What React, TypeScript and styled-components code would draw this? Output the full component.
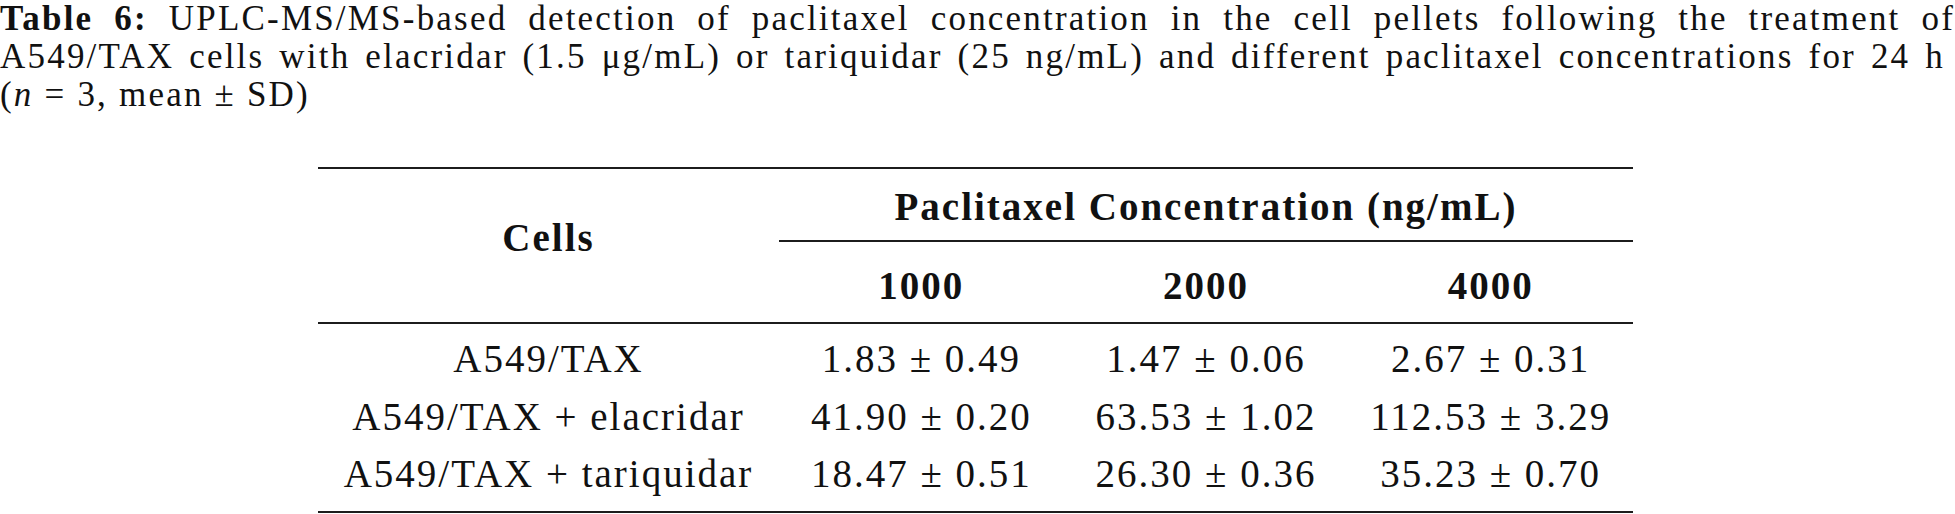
import React from "react";
import styled, { createGlobalStyle } from "styled-components";

const GlobalStyle = createGlobalStyle`
  html, body {
    margin: 0;
    padding: 0;
    background: #ffffff;
  }
  body {
    font-family: "Liberation Serif", "Times New Roman", serif;
    color: #111111;
    overflow: hidden;
  }
`;

const Page = styled.div`
  width: 1955px;
  height: 514px;
  padding-top: 1px;
  box-sizing: border-box;
`;

const Caption = styled.p`
  margin: -1px 0 0 0;
  font-size: 35px;
  line-height: 38px;
  letter-spacing: 2.2px;
`;

const CaptionLine = styled.span<{ $justify?: boolean; $inset?: number }>`
  display: block;
  white-space: nowrap;
  text-align: justify;
  text-align-last: ${(p) => (p.$justify ? "justify" : "left")};
  padding-right: ${(p) => p.$inset ?? 0}px;
`;

const Label = styled.strong`
  font-weight: 700;
`;

const Em = styled.em`
  font-style: italic;
`;

const Table = styled.table`
  margin: 53px 0 0 318px;
  width: 1315px;
  border-collapse: separate;
  border-spacing: 0;
  table-layout: fixed;
  font-size: 39px;
  letter-spacing: 2px;
  color: #111111;
`;

const rule = "2px solid #1c1c1c";

const CellsHead = styled.th`
  width: 461px;
  font-weight: 700;
  text-align: center;
  vertical-align: top;
  line-height: 43px;
  padding: 47px 0 0 0;
  border-top: ${rule};
  border-bottom: ${rule};
`;

const GroupHead = styled.th`
  font-weight: 700;
  text-align: center;
  line-height: 43px;
  padding: 16px 0 12px 0;
  border-top: ${rule};
  border-bottom: ${rule};
`;

const ConcHead = styled.th`
  font-weight: 700;
  text-align: center;
  line-height: 43px;
  padding: 22px 0 15px 0;
  border-bottom: ${rule};
`;

const Row = styled.tr`
  &:first-child td {
    padding-top: 6px;
  }
  &:last-child td {
    padding-bottom: 8px;
    border-bottom: ${rule};
  }
`;

const Cell = styled.td`
  text-align: center;
  line-height: 57.5px;
  padding: 0;
  white-space: nowrap;
`;

const rows: { cells: string; values: string[] }[] = [
  { cells: "A549/TAX", values: ["1.83 ± 0.49", "1.47 ± 0.06", "2.67 ± 0.31"] },
  { cells: "A549/TAX + elacridar", values: ["41.90 ± 0.20", "63.53 ± 1.02", "112.53 ± 3.29"] },
  { cells: "A549/TAX + tariquidar", values: ["18.47 ± 0.51", "26.30 ± 0.36", "35.23 ± 0.70"] },
];

const concentrations = ["1000", "2000", "4000"];

export default function App() {
  return (
    <>
      <GlobalStyle />
      <Page>
        <Caption>
          <CaptionLine $justify>
            <Label>Table 6:</Label> UPLC-MS/MS-based detection of paclitaxel concentration in the cell pellets following the treatment of
          </CaptionLine>
          <CaptionLine $justify $inset={10}>
            A549/TAX cells with elacridar (1.5 μg/mL) or tariquidar (25 ng/mL) and different paclitaxel concentrations for 24 h
          </CaptionLine>
          <CaptionLine>
            (<Em>n</Em> = 3, mean ± SD)
          </CaptionLine>
        </Caption>
        <Table>
          <thead>
            <tr>
              <CellsHead rowSpan={2}>Cells</CellsHead>
              <GroupHead colSpan={3}>Paclitaxel Concentration (ng/mL)</GroupHead>
            </tr>
            <tr>
              {concentrations.map((c) => (
                <ConcHead key={c}>{c}</ConcHead>
              ))}
            </tr>
          </thead>
          <tbody>
            {rows.map((r) => (
              <Row key={r.cells}>
                <Cell>{r.cells}</Cell>
                {r.values.map((v, i) => (
                  <Cell key={i}>{v}</Cell>
                ))}
              </Row>
            ))}
          </tbody>
        </Table>
      </Page>
    </>
  );
}
